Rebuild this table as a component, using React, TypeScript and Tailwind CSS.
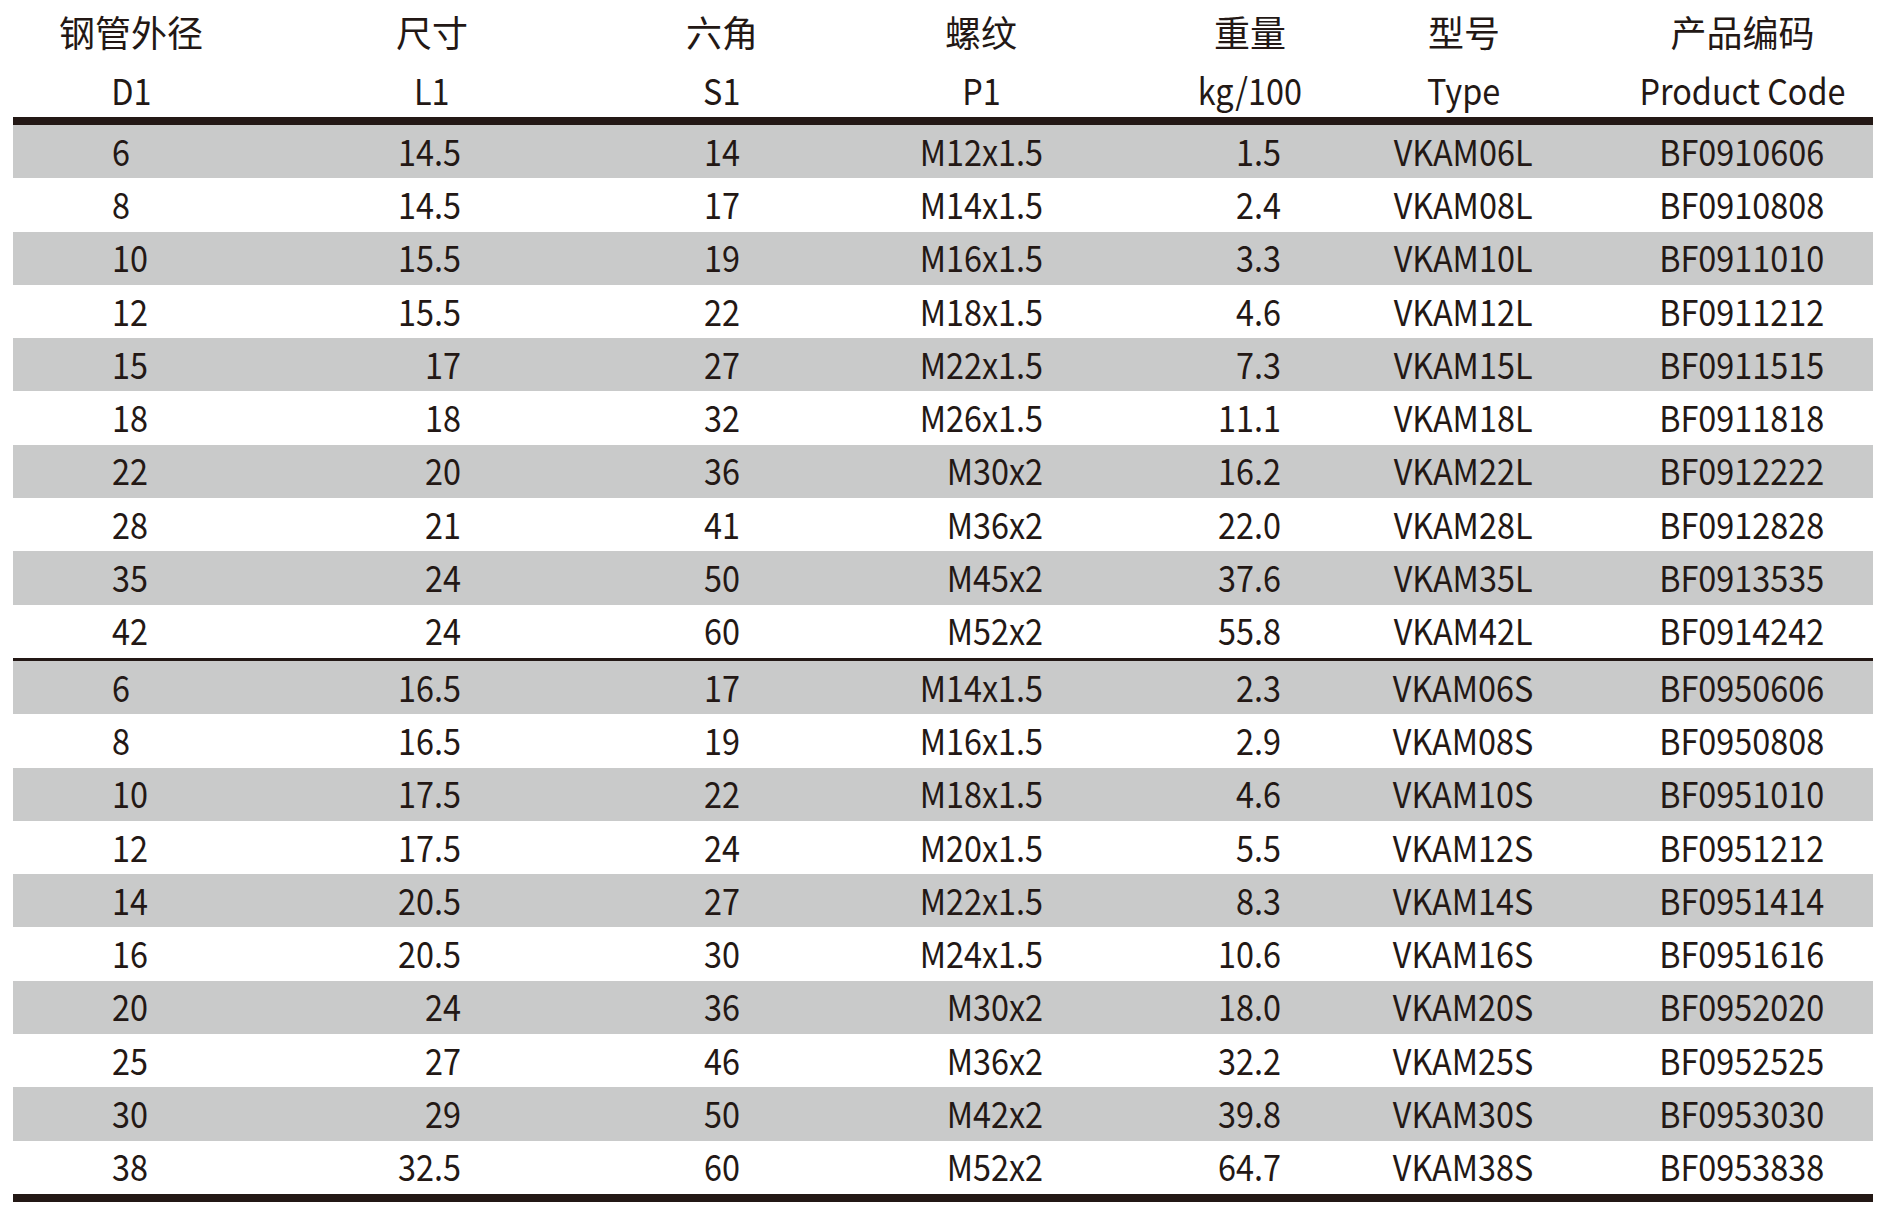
const columns = [
  { zh: "钢管外径", en: "D1", head: "pr-[33px]", body: "justify-start pl-[99px]", origin: "origin-left" },
  { zh: "尺寸", en: "L1", head: "pl-[4px]", body: "justify-end pr-[117px]", origin: "origin-right" },
  { zh: "六角", en: "S1", head: "pl-[11px]", body: "justify-center pl-[11px]", origin: "origin-center" },
  { zh: "螺纹", en: "P1", head: "pr-[14px]", body: "justify-end pr-[78px]", origin: "origin-right" },
  { zh: "重量", en: "kg/100", head: "pl-[15px]", body: "justify-end pr-[83px]", origin: "origin-right" },
  { zh: "型号", en: "Type", head: "pr-[48px]", body: "justify-center pr-[49px]", origin: "origin-center" },
  { zh: "产品编码", en: "Product Code", head: "", body: "justify-center pr-[2px]", origin: "origin-center" },
];

const seriesL = [
  ["6", "14.5", "14", "M12x1.5", "1.5", "VKAM06L", "BF0910606"],
  ["8", "14.5", "17", "M14x1.5", "2.4", "VKAM08L", "BF0910808"],
  ["10", "15.5", "19", "M16x1.5", "3.3", "VKAM10L", "BF0911010"],
  ["12", "15.5", "22", "M18x1.5", "4.6", "VKAM12L", "BF0911212"],
  ["15", "17", "27", "M22x1.5", "7.3", "VKAM15L", "BF0911515"],
  ["18", "18", "32", "M26x1.5", "11.1", "VKAM18L", "BF0911818"],
  ["22", "20", "36", "M30x2", "16.2", "VKAM22L", "BF0912222"],
  ["28", "21", "41", "M36x2", "22.0", "VKAM28L", "BF0912828"],
  ["35", "24", "50", "M45x2", "37.6", "VKAM35L", "BF0913535"],
  ["42", "24", "60", "M52x2", "55.8", "VKAM42L", "BF0914242"],
];

const seriesS = [
  ["6", "16.5", "17", "M14x1.5", "2.3", "VKAM06S", "BF0950606"],
  ["8", "16.5", "19", "M16x1.5", "2.9", "VKAM08S", "BF0950808"],
  ["10", "17.5", "22", "M18x1.5", "4.6", "VKAM10S", "BF0951010"],
  ["12", "17.5", "24", "M20x1.5", "5.5", "VKAM12S", "BF0951212"],
  ["14", "20.5", "27", "M22x1.5", "8.3", "VKAM14S", "BF0951414"],
  ["16", "20.5", "30", "M24x1.5", "10.6", "VKAM16S", "BF0951616"],
  ["20", "24", "36", "M30x2", "18.0", "VKAM20S", "BF0952020"],
  ["25", "27", "46", "M36x2", "32.2", "VKAM25S", "BF0952525"],
  ["30", "29", "50", "M42x2", "39.8", "VKAM30S", "BF0953030"],
  ["38", "32.5", "60", "M52x2", "64.7", "VKAM38S", "BF0953838"],
];

// body type in the print is set slightly condensed
const grid = "grid grid-cols-[269px_296px_277px_266px_243px_248px_261px]";

function Rows({ rows }: { rows: string[][] }) {
  return (
    <div>
      {rows.map((row, i) => (
        <div key={i} className={[grid, "h-[53.3px]", i % 2 === 0 ? "bg-[#c9caca]" : "bg-white"].join(" ")}>
          {row.map((cell, j) => (
            <div key={j} className={["flex items-center pb-[4px]", columns[j].body].join(" ")}>
              <span className={["inline-block scale-x-[0.9]", columns[j].origin].join(" ")}>{cell}</span>
            </div>
          ))}
        </div>
      ))}
    </div>
  );
}

export default function App() {
  return (
    <div
      className="h-[1209px] w-[1890px] bg-white pl-[13px] text-[36px] leading-none text-[#231815]"
      style={{ fontFamily: '"Noto Sans CJK SC", "Noto Sans", sans-serif' }}
    >
      <div className="w-[1860px]">
        <div className={grid}>
          {columns.map((col) => (
            <div key={col.en} className={["flex flex-col items-center", col.head].join(" ")}>
              <div className="flex h-[64px] items-center pb-[2px]">{col.zh}</div>
              <div className="flex h-[53px] items-center pb-[4px]">
                <span className="inline-block origin-center scale-x-[0.9]">{col.en}</span>
              </div>
            </div>
          ))}
        </div>
        <div className="h-[8px] bg-[#231815]" />
        <Rows rows={seriesL} />
        <div className="h-[3px] bg-[#231815]" />
        <Rows rows={seriesS} />
        <div className="h-[8px] bg-[#231815]" />
      </div>
    </div>
  );
}
